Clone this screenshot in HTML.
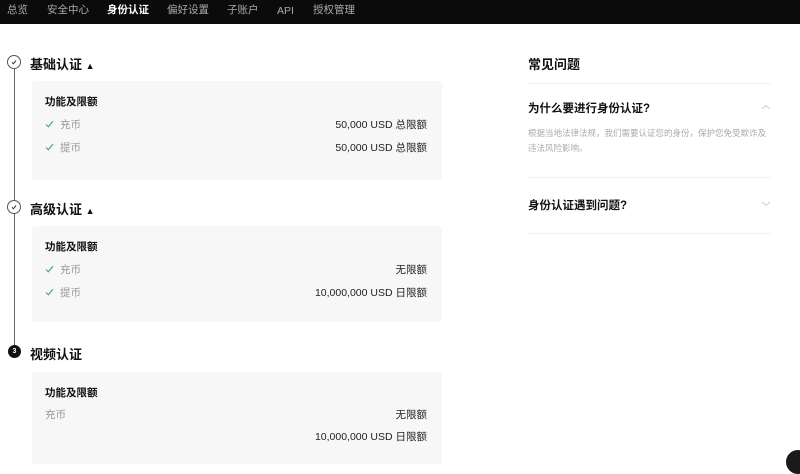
<!DOCTYPE html><html><head><meta charset="utf-8"><style>
*{margin:0;padding:0;box-sizing:border-box}
body{width:800px;height:462px;overflow:hidden;background:#fff;font-family:"Liberation Sans","Noto Sans CJK SC",sans-serif;color:#111;position:relative}
.nav{position:absolute;left:0;top:0;width:800px;height:24px;background:#0b0b0b}
.nav span{position:absolute;top:0;height:22px;line-height:20px;font-size:10.5px;color:#aaa}
.nav span.a{color:#fff;font-weight:bold}
.abs{position:absolute}
.t{font-size:13px;font-weight:bold}
.card{position:absolute;left:32px;width:410px;background:#f7f7f7;border-radius:3px}
.h{position:absolute;left:13px;font-size:10.5px;font-weight:bold}
.l{position:absolute;left:13px;font-size:10.5px;color:#999}
.l svg{display:inline-block;vertical-align:middle;margin-right:6px;margin-top:-2px}
.r{position:absolute;right:15px;font-size:10.5px;color:#222}
.ln{position:absolute;left:528px;width:243px;height:1px;background:#f0f0f0}
</style></head><body>
<div class="nav">
<span style="left:7px">总览</span><span style="left:47px">安全中心</span><span class="a" style="left:107px">身份认证</span><span style="left:167px">偏好设置</span><span style="left:227px">子账户</span><span style="left:277px;top:1px">API</span><span style="left:313px">授权管理</span>
</div>
<div class="abs" style="left:14px;top:69px;width:1px;height:276px;background:#666"></div>
<div class="abs" style="left:7px;top:55px;width:14px;height:14px;border:1px solid #555;border-radius:50%;background:#fff"><svg width="12" height="12" viewBox="0 0 12 12" style="position:absolute;left:0;top:0"><path d="M4 6.3 L5.4 7.7 L8 4.5" stroke="#333" stroke-width="1" fill="none"/></svg></div>
<div class="abs" style="left:7px;top:200px;width:14px;height:14px;border:1px solid #555;border-radius:50%;background:#fff"><svg width="12" height="12" viewBox="0 0 12 12" style="position:absolute;left:0;top:0"><path d="M4 6.3 L5.4 7.7 L8 4.5" stroke="#333" stroke-width="1" fill="none"/></svg></div>
<div class="abs" style="left:8px;top:345px;width:13px;height:13px;border-radius:50%;background:#111;color:#fff;font-size:7px;font-weight:bold;text-align:center;line-height:13px">3</div>
<div class="abs t" style="left:30px;top:54px">基础认证 <span style="font-size:9px">▲</span></div>
<div class="abs t" style="left:30px;top:199px">高级认证 <span style="font-size:9px">▲</span></div>
<div class="abs t" style="left:30px;top:344px">视频认证</div>
<div class="card" style="top:81px;height:99px">
<div class="h" style="top:13px">功能及限额</div>
<div class="l" style="top:36px"><svg width="9" height="8" viewBox="0 0 9 8"><path d="M1 4.5 L3.3 6.8 L8 1.2" stroke="#3fae7e" stroke-width="1.2" fill="none"/></svg>充币</div><div class="r" style="top:36px">50,000 USD 总限额</div>
<div class="l" style="top:59px"><svg width="9" height="8" viewBox="0 0 9 8"><path d="M1 4.5 L3.3 6.8 L8 1.2" stroke="#3fae7e" stroke-width="1.2" fill="none"/></svg>提币</div><div class="r" style="top:59px">50,000 USD 总限额</div>
</div>
<div class="card" style="top:226px;height:96px">
<div class="h" style="top:13px">功能及限额</div>
<div class="l" style="top:36px"><svg width="9" height="8" viewBox="0 0 9 8"><path d="M1 4.5 L3.3 6.8 L8 1.2" stroke="#3fae7e" stroke-width="1.2" fill="none"/></svg>充币</div><div class="r" style="top:36px">无限额</div>
<div class="l" style="top:59px"><svg width="9" height="8" viewBox="0 0 9 8"><path d="M1 4.5 L3.3 6.8 L8 1.2" stroke="#3fae7e" stroke-width="1.2" fill="none"/></svg>提币</div><div class="r" style="top:59px">10,000,000 USD 日限额</div>
</div>
<div class="card" style="top:372px;height:92px">
<div class="h" style="top:13px">功能及限额</div>
<div class="l" style="top:35px">充币</div><div class="r" style="top:35px">无限额</div>
<div class="r" style="top:57px">10,000,000 USD 日限额</div>
</div>
<div class="abs t" style="left:528px;top:54px">常见问题</div>
<div class="ln" style="top:83px"></div>
<div class="abs" style="left:528px;top:100px;font-size:11.5px;font-weight:bold">为什么要进行身份认证?</div>
<svg class="abs" style="left:761px;top:104px" width="10" height="6" viewBox="0 0 10 6"><path d="M1 5 L5 1.5 L9 5" stroke="#ccc" stroke-width="1" fill="none"/></svg>
<div class="abs" style="left:528px;top:126px;width:245px;font-size:8.5px;line-height:15px;color:#aaa">根据当地法律法规，我们需要认证您的身份，保护您免受欺诈及违法风险影响。</div>
<div class="ln" style="top:177px"></div>
<div class="abs" style="left:528px;top:197px;font-size:11.5px;font-weight:bold">身份认证遇到问题?</div>
<svg class="abs" style="left:761px;top:201px" width="10" height="6" viewBox="0 0 10 6"><path d="M1 1 L5 4.5 L9 1" stroke="#ccc" stroke-width="1" fill="none"/></svg>
<div class="ln" style="top:233px"></div>
<div class="abs" style="left:786px;top:450px;width:24px;height:24px;border-radius:50%;background:#1a1a1a"></div>
</body></html>
